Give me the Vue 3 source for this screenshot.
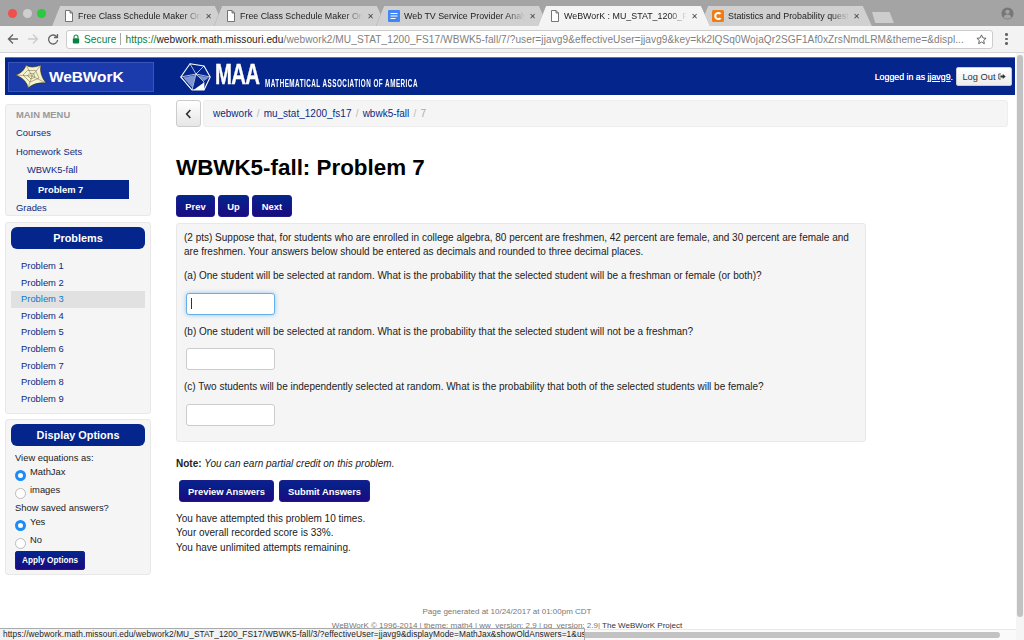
<script setup>
const tabs = [
  { title: 'Free Class Schedule Maker On', icon: 'doc' },
  { title: 'Free Class Schedule Maker On ', icon: 'doc' },
  { title: 'Web TV Service Provider Analy', icon: 'docs' },
  { title: 'WeBWorK : MU_STAT_1200_FS', icon: 'doc', active: true },
  { title: 'Statistics and Probability quest', icon: 'chegg' }
]
const menu = ['Courses', 'Homework Sets']
const problems = [1, 2, 3, 4, 5, 6, 7, 8, 9]
const crumbs = ['webwork', 'mu_stat_1200_fs17', 'wbwk5-fall']
</script>

<template>
  <div class="app">
    <header class="chrome">
      <div class="tabstrip">
        <div class="lights">
          <span class="light red"></span><span class="light grey"></span><span class="light green"></span>
        </div>
        <div v-for="t in tabs" :key="t.title" class="tab" :class="{ active: t.active }">
          <svg v-if="t.icon === 'doc'" class="favicon" viewBox="0 0 10 12" width="10" height="12">
            <path d="M1.5 .5h4.5l2.5 2.5v8.5h-7zM6 .5v2.5h2.5" fill="#fff" stroke="#666" stroke-width=".9" />
          </svg>
          <svg v-else-if="t.icon === 'docs'" class="favicon" viewBox="0 0 12 12" width="12" height="12">
            <rect width="12" height="12" rx="1" fill="#4285f4" />
            <path d="M2.5 3.5h7M2.5 6h7M2.5 8.5h5" stroke="#fff" stroke-width="1.2" />
          </svg>
          <svg v-else class="favicon" viewBox="0 0 12 12" width="12" height="12">
            <rect width="12" height="12" rx="1.5" fill="#f07c15" />
            <path d="M8.6 3.9A3.1 3.1 0 1 0 8.6 8.1" fill="none" stroke="#fff" stroke-width="2" />
          </svg>
          <span class="tabtitle">{{ t.title }}</span>
          <span class="tabclose">✕</span>
        </div>
        <div class="newtab"></div>
        <svg class="profile" viewBox="0 0 14 14" width="13" height="13">
          <circle cx="7" cy="7" r="6.5" fill="#777" />
          <circle cx="7" cy="5.2" r="2.3" fill="#a3a3a3" />
          <path d="M2.8 11c.8-2 2.4-2.8 4.2-2.8s3.4.8 4.2 2.8a6 6 0 0 1-8.4 0z" fill="#a3a3a3" />
        </svg>
      </div>
      <div class="toolbar">
        <svg class="navicon" viewBox="0 0 12 12" width="12" height="12"><path d="M11 6H2M6 1.5 1.5 6 6 10.5" fill="none" stroke="#666" stroke-width="1.4" /></svg>
        <svg class="navicon" viewBox="0 0 12 12" width="12" height="12"><path d="M1 6h9M6 1.5 10.5 6 6 10.5" fill="none" stroke="#ccc" stroke-width="1.4" /></svg>
        <svg class="navicon" viewBox="0 0 12 12" width="12" height="12"><path d="M10 4.2A4.5 4.5 0 1 0 10.6 7M10.5 1v3.5H7" fill="none" stroke="#666" stroke-width="1.3" /></svg>
        <div class="omnibox">
          <svg viewBox="0 0 10 12" width="8" height="10" class="lock"><path d="M2.5 5V3.4a2.5 2.5 0 0 1 5 0V5" fill="none" stroke="#0b8043" stroke-width="1.3" /><rect x="1" y="5" width="8" height="6.5" rx="1" fill="#0b8043" /></svg>
          <span class="secure">Secure</span>
          <span class="urlsep"></span>
          <span class="url"><span class="secure">https://</span><span class="host">webwork.math.missouri.edu</span>/webwork2/MU_STAT_1200_FS17/WBWK5-fall/7/?user=jjavg9&amp;effectiveUser=jjavg9&amp;key=kk2lQSq0WojaQr2SGF1Af0xZrsNmdLRM&amp;theme=&amp;displ...</span>
          <svg viewBox="0 0 12 12" width="11" height="11" class="star"><path d="M6 1l1.5 3.3 3.5.4-2.6 2.4.7 3.5L6 8.8l-3.1 1.8.7-3.5L1 4.7l3.5-.4z" fill="none" stroke="#555" stroke-width="1" /></svg>
        </div>
        <span class="kebab"><i></i><i></i><i></i></span>
      </div>
    </header>

    <div class="viewport">
      <div class="page">
        <div class="topbar">
          <div class="brand">
            <svg viewBox="0 0 32 25" width="32" height="25" class="web">
              <path d="M11 1Q16 5 26 1 24 10 31 19 20 18 13 24 12 16 1 11 9 8 11 1z" fill="#f6f2cc" stroke="#2f2f1c" stroke-width=".7" />
              <path d="M17 12 11 1M17 12 26 1M17 12 31 19M17 12 13 24M17 12 1 11M12.5 6.5 20.5 6.5 24 14 15 18 8 11zM15 9.5 18.5 9.5 20 13 16 15 12.5 11.5z" fill="none" stroke="#6b6848" stroke-width=".5" />
            </svg>
            <span class="brandname">WeBWorK</span>
          </div>
          <div class="maa">
            <svg viewBox="0 0 31 28" width="31" height="28">
              <path d="M10 .8 24 3 30.2 14 24 27 12 27 .8 14z" fill="#03258c" stroke="#fff" stroke-width="1.1" />
              <path d="M10 .8 16 11 .8 14 12 27M16 11 24 3M16 11 30.2 14M16 11 24 19 24 27M16 11 12 27" fill="none" stroke="#fff" stroke-width=".7" />
              <path d="M16 12 29 14.5 24 18zM15.5 12 12.5 25 3 14.5z" fill="#9db0e2" opacity=".8" />
              <path d="M13.5 27 24 19.5 24 27z" fill="#fff" />
            </svg>
            <span class="maamark">MAA</span>
            <span class="maaname">MATHEMATICAL ASSOCIATION OF AMERICA</span>
          </div>
          <div class="session">
            <span>Logged in as <u>jjavg9</u>.</span>
            <button class="logout">Log Out
              <svg viewBox="0 0 10 8" width="8" height="7"><path d="M3.5 .8H1v6.4h2.5" fill="none" stroke="#333" stroke-width="1" /><path d="M3 2.8h3V.8L9.6 4 6 7.2v-2H3z" fill="#333" /></svg>
            </button>
          </div>
        </div>

        <div class="columns">
          <aside class="sidebar">
            <nav class="panel mainmenu">
              <div class="menuhead">MAIN MENU</div>
              <a v-for="m in menu" :key="m" class="menuitem">{{ m }}</a>
              <a class="menuitem sub">WBWK5-fall</a>
              <a class="menuitem current">Problem 7</a>
              <a class="menuitem">Grades</a>
            </nav>
            <section class="panel problems">
              <h2 class="panelhead">Problems</h2>
              <ul class="problist">
                <li v-for="p in problems" :key="p" :class="{ hovered: p === 3 }">Problem {{ p }}</li>
              </ul>
            </section>
            <section class="panel options">
              <h2 class="panelhead">Display Options</h2>
              <div class="optbody">
                <div class="optlabel">View equations as:</div>
                <div class="radio"><span class="dot on"></span><span>MathJax</span></div>
                <div class="radio"><span class="dot"></span><span>images</span></div>
                <div class="optlabel">Show saved answers?</div>
                <div class="radio"><span class="dot on"></span><span>Yes</span></div>
                <div class="radio"><span class="dot"></span><span>No</span></div>
                <button class="btn apply">Apply Options</button>
              </div>
            </section>
          </aside>

          <main class="content">
            <div class="crumbrow">
              <button class="back">
                <svg viewBox="0 0 8 12" width="7" height="10"><path d="M6.2 1.2 1.8 6l4.4 4.8" fill="none" stroke="#333" stroke-width="2" /></svg>
              </button>
              <div class="crumbs">
                <template v-for="c in crumbs" :key="c"><a>{{ c }}</a><span class="slash">/</span></template>
                <span class="slash last">7</span>
              </div>
            </div>
            <h1 class="title">WBWK5-fall: Problem 7</h1>
            <div class="navbtns">
              <button class="btn nav">Prev</button>
              <button class="btn nav">Up</button>
              <button class="btn nav">Next</button>
            </div>
            <div class="problem">
              <p class="intro">(2 pts) Suppose that, for students who are enrolled in college algebra, 80 percent are freshmen, 42 percent are female, and 30 percent are female and are freshmen. Your answers below should be entered as decimals and rounded to three decimal places.</p>
              <p class="q">(a) One student will be selected at random. What is the probability that the selected student will be a freshman or female (or both)?</p>
              <div class="answer focused"><span class="caret"></span></div>
              <p class="q">(b) One student will be selected at random. What is the probability that the selected student will not be a freshman?</p>
              <div class="answer"></div>
              <p class="q">(c) Two students will be independently selected at random. What is the probability that both of the selected students will be female?</p>
              <div class="answer"></div>
            </div>
            <p class="note"><b>Note:</b> <i>You can earn partial credit on this problem.</i></p>
            <div class="submitrow">
              <button class="btn submit">Preview Answers</button>
              <button class="btn submit">Submit Answers</button>
            </div>
            <div class="attempts">
              <div>You have attempted this problem 10 times.</div>
              <div>Your overall recorded score is 33%.</div>
              <div>You have unlimited attempts remaining.</div>
            </div>
          </main>
        </div>

        <footer class="foot">
          <div>Page generated at 10/24/2017 at 01:00pm CDT</div>
          <div class="copy">WeBWorK © 1996-2014 | theme: math4 | ww_version: 2.9 | pg_version: 2.9| <span class="proj">The WeBWorK Project</span></div>
        </footer>
        <div class="hscroll"><span></span></div>
      </div>
      <div class="vscroll"><span></span></div>
      <div class="status">https://webwork.math.missouri.edu/webwork2/MU_STAT_1200_FS17/WBWK5-fall/3/?effectiveUser=jjavg9&amp;displayMode=MathJax&amp;showOldAnswers=1&amp;us</div>
    </div>
  </div>
</template>

<style>
html, body { margin: 0; overflow: hidden; }
</style>

<style scoped>
.app { width: 1024px; height: 640px; overflow: hidden; display: flex; flex-direction: column; background: #fff; font-family: "Liberation Sans", Arial, sans-serif; font-size: 10px; color: #222; }
button { font-family: inherit; cursor: pointer; }
p, h1, h2, ul { margin: 0; padding: 0; }

.chrome { flex: none; height: 53px; display: flex; flex-direction: column; }
.tabstrip { height: 26px; background: #a4a4a4; display: flex; align-items: flex-end; position: relative; }
.lights { width: 52px; height: 26px; flex: none; display: flex; align-items: center; gap: 5.5px; padding-left: 8px; box-sizing: border-box; }
.light { width: 9px; height: 9px; border-radius: 50%; }
.red { background: #f1504a; } .grey { background: #cfcfcf; } .green { background: #2bc840; }
.tab { position: relative; flex: none; width: 172px; height: 20px; margin-right: -10px; display: flex; align-items: center; padding: 0 12px 0 12px; box-sizing: border-box; filter: drop-shadow(0 0 .5px #7d7d7d); }
.tab::before { content: ""; position: absolute; inset: 0; background: #d0d0d0; clip-path: polygon(0 100%, 8px 0, calc(100% - 9px) 0, 100% 100%); }
.tab.active { z-index: 2; }
.tab.active::before { background: #f4f4f4; }
.favicon { position: relative; flex: none; margin-right: 4px; }
.tabtitle { position: relative; flex: 1; min-width: 0; white-space: nowrap; overflow: hidden; font-size: 8.9px; color: #222; -webkit-mask-image: linear-gradient(90deg, #000 85%, transparent 100%); mask-image: linear-gradient(90deg, #000 85%, transparent 100%); }
.tabclose { position: relative; flex: none; font-size: 8px; color: #444; margin-left: 4px; font-family: "DejaVu Sans", sans-serif; }
.newtab { width: 22px; height: 11px; margin: 0 0 3px 10px; background: #cdcdcd; clip-path: polygon(0 0, 80% 0, 100% 100%, 15% 100%); }
.profile { position: absolute; right: 10px; top: 7px; }
.toolbar { height: 27px; background: #f3f3f3; border-bottom: 1px solid #d5d5d5; display: flex; align-items: center; padding-left: 7px; box-sizing: border-box; gap: 8px; }
.navicon { flex: none; }
.omnibox { flex: none; width: 927px; height: 19px; margin-left: -1px; background: #fff; border: 1px solid #ccc; border-radius: 3px; box-sizing: border-box; display: flex; align-items: center; padding: 0 5px 0 5px; font-size: 10.1px; color: #808080; letter-spacing: .08px; white-space: nowrap; }
.lock { flex: none; margin-right: 4px; }
.secure { color: #0b8043; }
.urlsep { width: 1px; height: 12px; background: #aaa; margin: 0 4px; flex: none; }
.url { flex: 1; min-width: 0; overflow: hidden; }
.host { color: #222; }
.star { flex: none; margin-left: 6px; }
.kebab { display: flex; flex-direction: column; gap: 2px; margin-left: 4px; }
.kebab i { width: 2.5px; height: 2.5px; background: #666; border-radius: 50%; }

.viewport { flex: 1; min-height: 0; display: flex; position: relative; }
.page { width: 1016px; flex: none; position: relative; overflow: hidden; padding-top: 4px; box-sizing: border-box; }
.vscroll { width: 8px; background: #f5f5f5; padding-top: 2px; box-sizing: border-box; display: flex; justify-content: center; }
.vscroll span { width: 6px; height: 562px; background: #c2c2c2; border-radius: 3px; }

.topbar { height: 38px; margin: 0 1px 0 5px; background: #03258c; border-top: 1px solid #5c74b8; box-sizing: border-box; display: flex; align-items: center; color: #fff; padding: 0 3px; }
.brand { width: 146px; height: 30px; background: #1b3aac; border: 1px solid #3a55b8; box-sizing: border-box; display: flex; align-items: center; padding-left: 6px; gap: 2px; flex: none; }
.brandname { font-size: 15.5px; font-weight: 700; letter-spacing: -.1px; }
.maa { display: flex; align-items: center; margin-left: 26px; position: relative; height: 30px; }
.maamark { font-size: 30px; font-weight: 700; line-height: 30px; width: 46px; margin-left: 4px; transform: scaleX(.68); transform-origin: left center; letter-spacing: -1px; margin-top: -6px; -webkit-text-stroke: .4px #fff; }
.maaname { font-size: 10px; font-weight: 700; margin-left: 4px; margin-top: 14px; white-space: nowrap; transform: scaleX(.632); transform-origin: left center; letter-spacing: .75px; }
.session { margin-left: auto; display: flex; align-items: center; gap: 3px; font-size: 8.8px; text-shadow: 0 0 .5px #fff; }
.logout { width: 56px; height: 19px; padding: 0; background: linear-gradient(#fff, #ececec); border: 1px solid #ccc; border-radius: 2px; font-size: 9.3px; color: #333; display: flex; align-items: center; justify-content: center; gap: 2px; text-shadow: none; }

.columns { display: flex; align-items: flex-start; margin: 5px 0 0 5px; }
.sidebar { width: 146px; flex: none; display: flex; flex-direction: column; margin-top: 4px; font-size: 9.4px; }
.panel { background: #f5f5f5; border: 1px solid #e8e8e8; border-radius: 3px; box-sizing: border-box; }
.mainmenu { height: 112px; margin-bottom: 6px; padding: 0 10px; display: flex; flex-direction: column; }
.menuhead { color: #999; font-weight: 700; height: 19px; line-height: 19px; }
.menuitem { color: #0d2a80; height: 18.5px; line-height: 18.5px; }
.sub { margin-left: 11px; }
.current { margin-left: 11px; width: 102px; background: #03258c; color: #fff; font-weight: 700; padding-left: 11px; box-sizing: border-box; height: 19px; line-height: 19px; }
.problems { height: 192px; margin-bottom: 5px; padding: 4px 5px 0; }
.options { height: 156px; padding: 4px 5px 0; }
.panelhead { height: 22px; line-height: 22px; background: #03258c; border-radius: 6px; color: #fff; font-size: 10.9px; font-weight: 700; text-align: center; }
.problist { list-style: none; padding-top: 9px; }
.problist li { height: 16.6px; line-height: 16.6px; padding-left: 10px; color: #0d2a80; }
.problist li.hovered { background: #e1e1e1; color: #0b78d0; }
.optbody { padding: 5px 0 0 4px; }
.optlabel { height: 14px; line-height: 14px; }
.radio { display: flex; height: 18px; line-height: 14px; gap: 4px; }
.dot { width: 11px; height: 11px; border-radius: 50%; border: 1px solid #bbb; background: #fff; box-sizing: border-box; margin-top: 5px; }
.dot.on { background: #fff; border: 3.5px solid #1e8cf5; }
.btn { background: linear-gradient(#03258c, #1c0a80); color: #fff; border: 1px solid #1c1c8c; border-radius: 3px; font-weight: 700; padding: 0; font-size: 9.4px; }
.apply { width: 70px; height: 19px; font-size: 8.2px; border-radius: 2px; }

.content { margin-left: 25px; width: 832px; }
.crumbrow { display: flex; gap: 2px; height: 27px; }
.back { width: 25px; height: 27px; padding: 0; background: linear-gradient(#fff, #e6e6e6); border: 1px solid #ccc; border-radius: 3px; display: flex; align-items: center; justify-content: center; }
.crumbs { flex: 1; background: #f5f5f5; border: 1px solid #eee; border-radius: 3px; display: flex; align-items: center; padding-left: 9px; box-sizing: border-box; color: #0d2a80; }
.slash { color: #bbb; margin: 0 4.2px; }
.slash.last { margin: 0; color: #aaa; }
.title { font-size: 22.4px; font-weight: 700; color: #000; line-height: 28px; margin-top: 27px; height: 41px; }
.navbtns { display: flex; gap: 3px; height: 22px; margin-bottom: 6px; }
.nav { height: 22px; }
.nav:nth-child(1) { width: 39px; } .nav:nth-child(2) { width: 31px; } .nav:nth-child(3) { width: 40px; }
.problem { width: 690px; height: 219px; background: #f5f5f5; border: 1px solid #e8e8e8; border-radius: 3px; box-sizing: border-box; padding: 7px 8px 0 7px; }
.intro { line-height: 14px; margin-bottom: 10px; }
.q { line-height: 14.5px; height: 14.5px; white-space: nowrap; }
.answer { width: 89px; height: 22px; margin: 9px 0 10px 2px; background: #fff; border: 1px solid #ccc; border-radius: 3px; box-sizing: border-box; display: flex; align-items: center; padding-left: 4px; }
.answer.focused { border-color: #66afe9; box-shadow: 0 0 4px rgba(102,175,233,.7); }
.caret { width: 1px; height: 11px; background: #333; }
.note { margin-top: 15px; line-height: 14px; }
.submitrow { display: flex; gap: 5px; margin: 9px 0 10px 3px; }
.submit { height: 22px; }
.submit:nth-child(1) { width: 95px; } .submit:nth-child(2) { width: 91px; }
.attempts { line-height: 14.3px; }

.foot { position: absolute; top: 552px; left: 0; width: 1014px; text-align: center; font-size: 8px; color: #777; line-height: 14px; }
.proj { color: #333; }
.hscroll { position: absolute; left: 0; right: 0; bottom: 0; height: 11px; background: #fafafa; border-top: 1px solid #e8e8e8; box-sizing: border-box; padding: 2px 16px 2px 2px; }
.hscroll span { display: block; height: 6px; background: #c2c2c2; border-radius: 3px; }
.status { position: absolute; left: 0; bottom: 0; width: 585px; height: 12px; background: #f2f2f2; border: 1px solid #aaa; border-left: 0; border-bottom: 0; box-sizing: border-box; font-size: 8.3px; line-height: 11px; padding-left: 3px; white-space: nowrap; overflow: hidden; color: #222; letter-spacing: .08px; }
</style>
